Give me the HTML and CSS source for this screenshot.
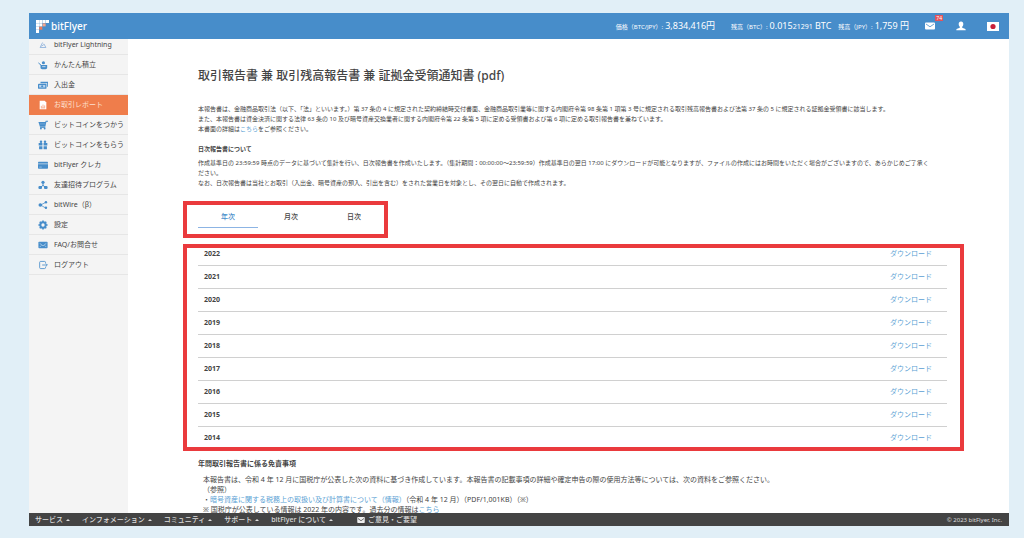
FILE: index.html
```html
<!DOCTYPE html>
<html lang="ja">
<head>
<meta charset="utf-8">
<title>bitFlyer お取引レポート</title>
<link rel="stylesheet" href="styles.css">
</head>
<body>
<div class="app">
  <header class="topbar">
    <a class="logo" href="#">
      <svg viewBox="0 0 12 12" width="13" height="13" aria-hidden="true"><path fill="#fff" d="M0 0h2.800v2.800H0zM3 0h2.800v2.800H3zM6.100 0h2.800v2.800H6.100zM9.200 0H12v2.800H9.200zM0 3.100h2.800v2.800H0zM0 6.200h2.800v2.800H0zM0 9.200h2.800V12H0zM3 3.100h2.800v2.800H3z"/><path fill="#f5a58c" d="M6.100 3.100h2.800v2.800H6.100z"/><path fill="#ef7b58" d="M3 6.200h2.800v2.800H3z"/></svg>
      <span>bitFlyer</span>
    </a>
    <dl class="rates">
      <div class="rate rate-price"><dt>価格（BTC/JPY）:</dt><dd>3,834,416円</dd></div>
      <div class="rate"><dt>残高（BTC）:</dt><dd>0.015<small>21291</small> BTC</dd></div>
      <div class="rate"><dt>残高（JPY）:</dt><dd>1,759 円</dd></div>
    </dl>
    <div class="tools">
      <button class="tool" type="button" aria-label="メッセージ"><svg viewBox="0 0 10 8" width="10" height="8"><rect y="0.5" width="10" height="7" rx="1" fill="#fff"/><path d="M1 2l4 2.800L9 2" fill="none" stroke="#478dca" stroke-width=".8"/></svg><span class="badge">74</span></button>
      <button class="tool" type="button" aria-label="アカウント"><svg viewBox="0 0 10 10" width="10" height="10"><path fill="#fff" d="M5 .5c1.600 0 2.300 1.100 2.300 2.500 0 1.300-.5 2.200-1.100 2.700v1l2.600 1c.7.300.9.800.9 1.600H.3c0-.8.200-1.300.9-1.600l2.600-1v-1C3.200 5.200 2.700 4.300 2.700 3 2.700 1.600 3.400.5 5 .5z"/></svg></button>
      <button class="tool" type="button" aria-label="日本語"><svg viewBox="0 0 12 9" width="12" height="9"><rect width="12" height="9" fill="#fff"/><circle cx="6" cy="4.500" r="2.600" fill="#c8203a"/></svg></button>
    </div>
  </header>

  <div class="body">
    <nav class="sidebar">
      <ul>
        <li><a href="#"><svg viewBox="0 0 12 12"><path d="M5.500 3L2.500 9h7L7 4.500M4 7.500l3-2" fill="none" stroke="#7fa8d8" stroke-width=".9"/></svg>bitFlyer Lightning</a></li>
        <li><a href="#"><svg viewBox="0 0 12 12"><path d="M3 6h8v3c0 1.200-.8 2-2 2H5c-1.200 0-2-.8-2-2z"/><circle cx="6.500" cy="3.300" r="1.900"/><path d="M.5 3.500L4 6.500" stroke="#478dca" stroke-width="1.200"/><path d="M5 8h4" stroke="#fff" stroke-width=".8"/></svg>かんたん積立</a></li>
        <li><a href="#"><svg viewBox="0 0 12 12"><path d="M3 2h9v6h-1V4H3z"/><rect x="0" y="4.500" width="10.200" height="6" rx="1"/><path d="M1.400 6h7.300v3H1.400z" fill="#b9d4ee"/><circle cx="5" cy="7.500" r="1.300"/></svg>入出金</a></li>
        <li><a class="active" href="#" aria-current="page"><svg viewBox="0 0 12 12"><path d="M2 1h6l2 2v8H2z"/><path d="M4 9V7m2 2V5.500M8 9V6.500M3.500 9.500h5" stroke="#ef7d4b" fill="none" stroke-width=".7"/></svg>お取引レポート</a></li>
        <li><a href="#"><svg viewBox="0 0 12 12"><path d="M.5 2.500h8.200L9.300 1H12v1.200h-1.900L8.800 8H2.300z"/><path d="M2 4.700h7" stroke="#c9def2" stroke-width=".4"/><path d="M2.500 9h6.200" stroke="#478dca"/><circle cx="3.500" cy="10.200" r="1.100"/><circle cx="8" cy="10.200" r="1.100"/></svg>ビットコインをつかう</a></li>
        <li><a href="#"><svg viewBox="0 0 12 12"><path d="M.8 3.500h4.500v3H.8zM6.700 3.500h4.500v3H6.700zM1.300 7.500h4V11h-4zM6.700 7.500h4V11h-4z"/><circle cx="3.600" cy="2" r="1.500"/><circle cx="8.400" cy="2" r="1.500"/></svg>ビットコインをもらう</a></li>
        <li><a href="#"><svg viewBox="0 0 12 12"><rect x="0" y="2" width="12" height="8.500" rx=".8"/><path d="M0 4.600h12" stroke="#f4f4f4" stroke-width=".7"/><path d="M1.500 8.500h3" stroke="#b9d4ee" stroke-width=".8"/></svg>bitFlyer クレカ</a></li>
        <li><a href="#"><svg viewBox="0 0 12 12"><circle cx="6" cy="2.800" r="1.900"/><path d="M6 4v3M2.500 9L6 6.500 9.500 9" fill="none" stroke="#478dca" stroke-width="1.200"/><rect x=".5" y="7.300" width="4.300" height="3.500" rx="1.300"/><rect x="7.200" y="7.300" width="4.300" height="3.500" rx="1.300"/></svg>友達招待プログラム</a></li>
        <li><a href="#"><svg viewBox="0 0 12 12"><path d="M3 6l6-3M3 6l6 3.500" stroke="#478dca" stroke-width=".9"/><circle cx="2.800" cy="6" r="2.200"/><circle cx="9.500" cy="2.800" r="1.500"/><circle cx="9.500" cy="9.200" r="1.500"/></svg>bitWire（β）</a></li>
        <li><a href="#"><svg viewBox="0 0 12 12"><circle cx="6" cy="6" r="3.200" fill="none" stroke="#478dca" stroke-width="2.400"/><path d="M6 .5v2M6 9.500v2M.5 6h2M9.500 6h2M2.100 2.100l1.400 1.400M8.500 8.500l1.400 1.400M2.100 9.900l1.400-1.400M8.500 3.500l1.400-1.400" stroke="#478dca" stroke-width="1.900"/></svg>設定</a></li>
        <li><a href="#"><svg viewBox="0 0 12 12"><rect x=".5" y="2" width="11" height="8" rx="1"/><path d="M2 4l4 3 4-3M2 8.500l2-2M10 8.500l-2-2" fill="none" stroke="#d9e8f6" stroke-width=".7"/></svg>FAQ/お問合せ</a></li>
        <li><a href="#"><svg viewBox="0 0 12 12"><path d="M9 4V2.800c0-.7-.4-1.100-1.100-1.100H3.100c-.7 0-1.100.4-1.100 1.100v6.400c0 .7.400 1.100 1.100 1.100h4.800c.7 0 1.100-.4 1.100-1.100V8M5 6h6M9.500 4.300L11.200 6 9.500 7.700" fill="none" stroke="#478dca"/></svg>ログアウト</a></li>
      </ul>
    </nav>

    <main class="main">
      <h1>取引報告書 兼 取引残高報告書 兼 証拠金受領通知書 (pdf)</h1>
      <p class="intro">本報告書は、金融商品取引法（以下、「法」といいます。）第 37 条の 4 に規定された契約締結時交付書面、金融商品取引業等に関する内閣府令第 98 条第 1 項第 3 号に規定される取引残高報告書および法第 37 条の 5 に規定される証拠金受領書に該当します。<br>また、本報告書は資金決済に関する法律 63 条の 10 及び暗号資産交換業者に関する内閣府令第 22 条第 5 項に定める受領書および第 6 項に定める取引報告書を兼ねています。<br>本書面の詳細は<a href="#">こちら</a>をご参照ください。</p>
      <h2 class="daily-title">日次報告書について</h2>
      <p class="daily">作成基準日の 23:59:59 時点のデータに基づいて集計を行い、日次報告書を作成いたします。（集計期間：00:00:00～23:59:59）作成基準日の翌日 17:00 にダウンロードが可能となりますが、ファイルの作成にはお時間をいただく場合がございますので、あらかじめご了承く<span class="keep">ださい。</span><br>なお、日次報告書は当社とお取引（入出金、暗号資産の預入、引出を含む）をされた営業日を対象とし、その翌日に自動で作成されます。</p>

      <div class="tabs marked" role="tablist">
        <button class="tab selected" type="button" role="tab" aria-selected="true">年次</button>
        <button class="tab" type="button" role="tab" aria-selected="false">月次</button>
        <button class="tab" type="button" role="tab" aria-selected="false">日次</button>
      </div>

      <div class="reports marked">
        <table>
          <tbody>
            <tr><th scope="row">2022</th><td><a href="#">ダウンロード</a></td></tr>
            <tr><th scope="row">2021</th><td><a href="#">ダウンロード</a></td></tr>
            <tr><th scope="row">2020</th><td><a href="#">ダウンロード</a></td></tr>
            <tr><th scope="row">2019</th><td><a href="#">ダウンロード</a></td></tr>
            <tr><th scope="row">2018</th><td><a href="#">ダウンロード</a></td></tr>
            <tr><th scope="row">2017</th><td><a href="#">ダウンロード</a></td></tr>
            <tr><th scope="row">2016</th><td><a href="#">ダウンロード</a></td></tr>
            <tr><th scope="row">2015</th><td><a href="#">ダウンロード</a></td></tr>
            <tr><th scope="row">2014</th><td><a href="#">ダウンロード</a></td></tr>
          </tbody>
        </table>
      </div>

      <h2 class="notes-title">年間取引報告書に係る免責事項</h2>
      <p class="notes">本報告書は、令和 4 年 12 月に国税庁が公表した次の資料に基づき作成しています。本報告書の記載事項の詳細や確定申告の際の使用方法等については、次の資料をご参照ください。<br>（参照）<br>・<a href="#">暗号資産に関する税務上の取扱い及び計算書について（情報）</a>（令和 4 年 12 月）（PDF/1,001KB）（※）<br>※ 国税庁が公表している情報は 2022 年の内容です。過去分の情報は<a href="#">こちら</a></p>
    </main>
  </div>

  <footer class="footer">
    <nav class="footer-nav">
      <button type="button">サービス<i class="caret"></i></button>
      <button type="button">インフォメーション<i class="caret"></i></button>
      <button type="button">コミュニティ<i class="caret"></i></button>
      <button type="button">サポート<i class="caret"></i></button>
      <button type="button">bitFlyer について<i class="caret"></i></button>
      <a class="feedback" href="#"><svg viewBox="0 0 10 8" width="8" height="6" aria-hidden="true"><rect width="10" height="8" rx="1" fill="#eee"/><path d="M1 2l4 3 4-3" fill="none" stroke="#444"/></svg>ご意見・ご要望</a>
    </nav>
    <small class="copyright">© 2023 bitFlyer, Inc.</small>
  </footer>
</div>
</body>
</html>
```
FILE: styles.css
```css
* {
  box-sizing: border-box;
}

body {
  margin: 0;
  background: #e1eff7;
  color: #444;
  font: 6px/10px "Noto Sans", "Noto Sans CJK JP", sans-serif;
}

a {
  color: #5b9fd4;
  text-decoration: none;
}

button {
  border: 0;
  padding: 0;
  background: none;
  color: inherit;
  font: inherit;
}

h1, h2, p, ul, dl, dd {
  margin: 0;
  padding: 0;
}

.app {
  display: flex;
  flex-direction: column;
  height: 100vh;
  padding: 13px 15px 12px 29px;
}

/* Top bar */
.topbar {
  display: flex;
  align-items: center;
  flex: none;
  height: 26px;
  padding: 0 10px 0 7px;
  background: #478dca;
  color: #fff;
}

.logo {
  display: flex;
  align-items: center;
  gap: 2px;
  color: #fff;
  font-size: 10px;
  font-weight: 500;
}

.rates {
  display: flex;
  gap: 7px;
  margin-left: auto;
}

.rate {
  display: flex;
  align-items: baseline;
  gap: 2px;
  white-space: nowrap;
}

.rate-price {
  margin-right: 9px;
}

.rate dd {
  font-size: 9px;
}

.rate small {
  font-size: 7px;
}

.tools {
  display: flex;
  gap: 21px;
  margin-left: 16px;
}

.tool {
  position: relative;
  display: flex;
  align-items: center;
}

.badge {
  position: absolute;
  top: -6px;
  right: -8px;
  padding: 0 1px;
  background: #e2545c;
  color: #fff;
  font-size: 5px;
  line-height: 6px;
}

/* Page body */
.body {
  display: flex;
  flex: 1;
  min-height: 0;
  overflow: hidden;
  background: #fff;
}

.sidebar {
  flex: none;
  width: 99px;
  background: #f4f4f4;
}

.sidebar ul {
  margin-top: -4px;
  list-style: none;
}

.sidebar a {
  display: flex;
  align-items: center;
  gap: 6px;
  height: 20px;
  padding-left: 9px;
  border-bottom: 1px solid #e6e6e6;
  color: #444;
  font-size: 7px;
  white-space: nowrap;
}

.sidebar svg {
  width: 10px;
  height: 10px;
  fill: #478dca;
}

.sidebar .active {
  background: #ef7d4b;
  border-color: #ef7d4b;
  color: #fde0d0;
}

.sidebar .active svg {
  fill: #fff;
}

.main {
  flex: 1;
  min-width: 0;
  padding: 29px 62px 0 70px;
}

h1 {
  font-size: 12px;
  font-weight: 500;
  line-height: 16px;
}

h2 {
  font-size: 6px;
  font-weight: 700;
}

.intro {
  margin-top: 20px;
}

.daily-title {
  margin-top: 10px;
}

.daily {
  margin-top: 4px;
}

.keep {
  display: inline-block;
}

/* Red frames that call out the tabs and the report list */
.marked {
  border: 4px solid #ea3a3d;
}

.tabs {
  display: flex;
  gap: 3px;
  width: fit-content;
  margin: 13px 0 0 -15px;
  padding: 2px 0 6px 11px;
}

.tab {
  width: 60px;
  height: 21px;
  border-bottom: 1px solid transparent;
  font-size: 7px;
  font-weight: 500;
}

.tab.selected {
  border-color: #8cb4e4;
  color: #478dca;
}

.reports {
  margin: 6px -17px 0 -15px;
  padding: 0 13px 0 11px;
}

table {
  width: 100%;
  border-collapse: separate;
  border-spacing: 0;
  font-size: 7px;
}

th, td {
  padding: 6px 15px 6px 6px;
  border-bottom: 1px solid #d0d0d0;
  text-align: left;
}

td {
  text-align: right;
}

tr:first-child > * {
  padding-top: 1px;
}

tr:last-child > * {
  padding-bottom: 4px;
  border-bottom: 0;
}

.notes-title {
  margin-top: 8px;
  font-size: 7px;
}

.notes {
  margin-top: 6px;
  padding-left: 5px;
  font-size: 7px;
}

/* Footer */
.footer {
  display: flex;
  align-items: center;
  justify-content: space-between;
  flex: none;
  height: 13px;
  padding: 0 7px 0 6px;
  background: #444;
  color: #ddd;
  white-space: nowrap;
}

.footer-nav {
  display: flex;
  align-items: center;
  gap: 12px;
  font-size: 7px;
  font-weight: 500;
}

.footer-nav > * {
  display: flex;
  align-items: center;
  gap: 3px;
}

.caret {
  border: 2px solid transparent;
  border-top: 0;
  border-bottom-color: #ddd;
}

.feedback {
  margin-left: 12px;
  color: #ddd;
}

.copyright {
  font-size: 6px;
}
```
